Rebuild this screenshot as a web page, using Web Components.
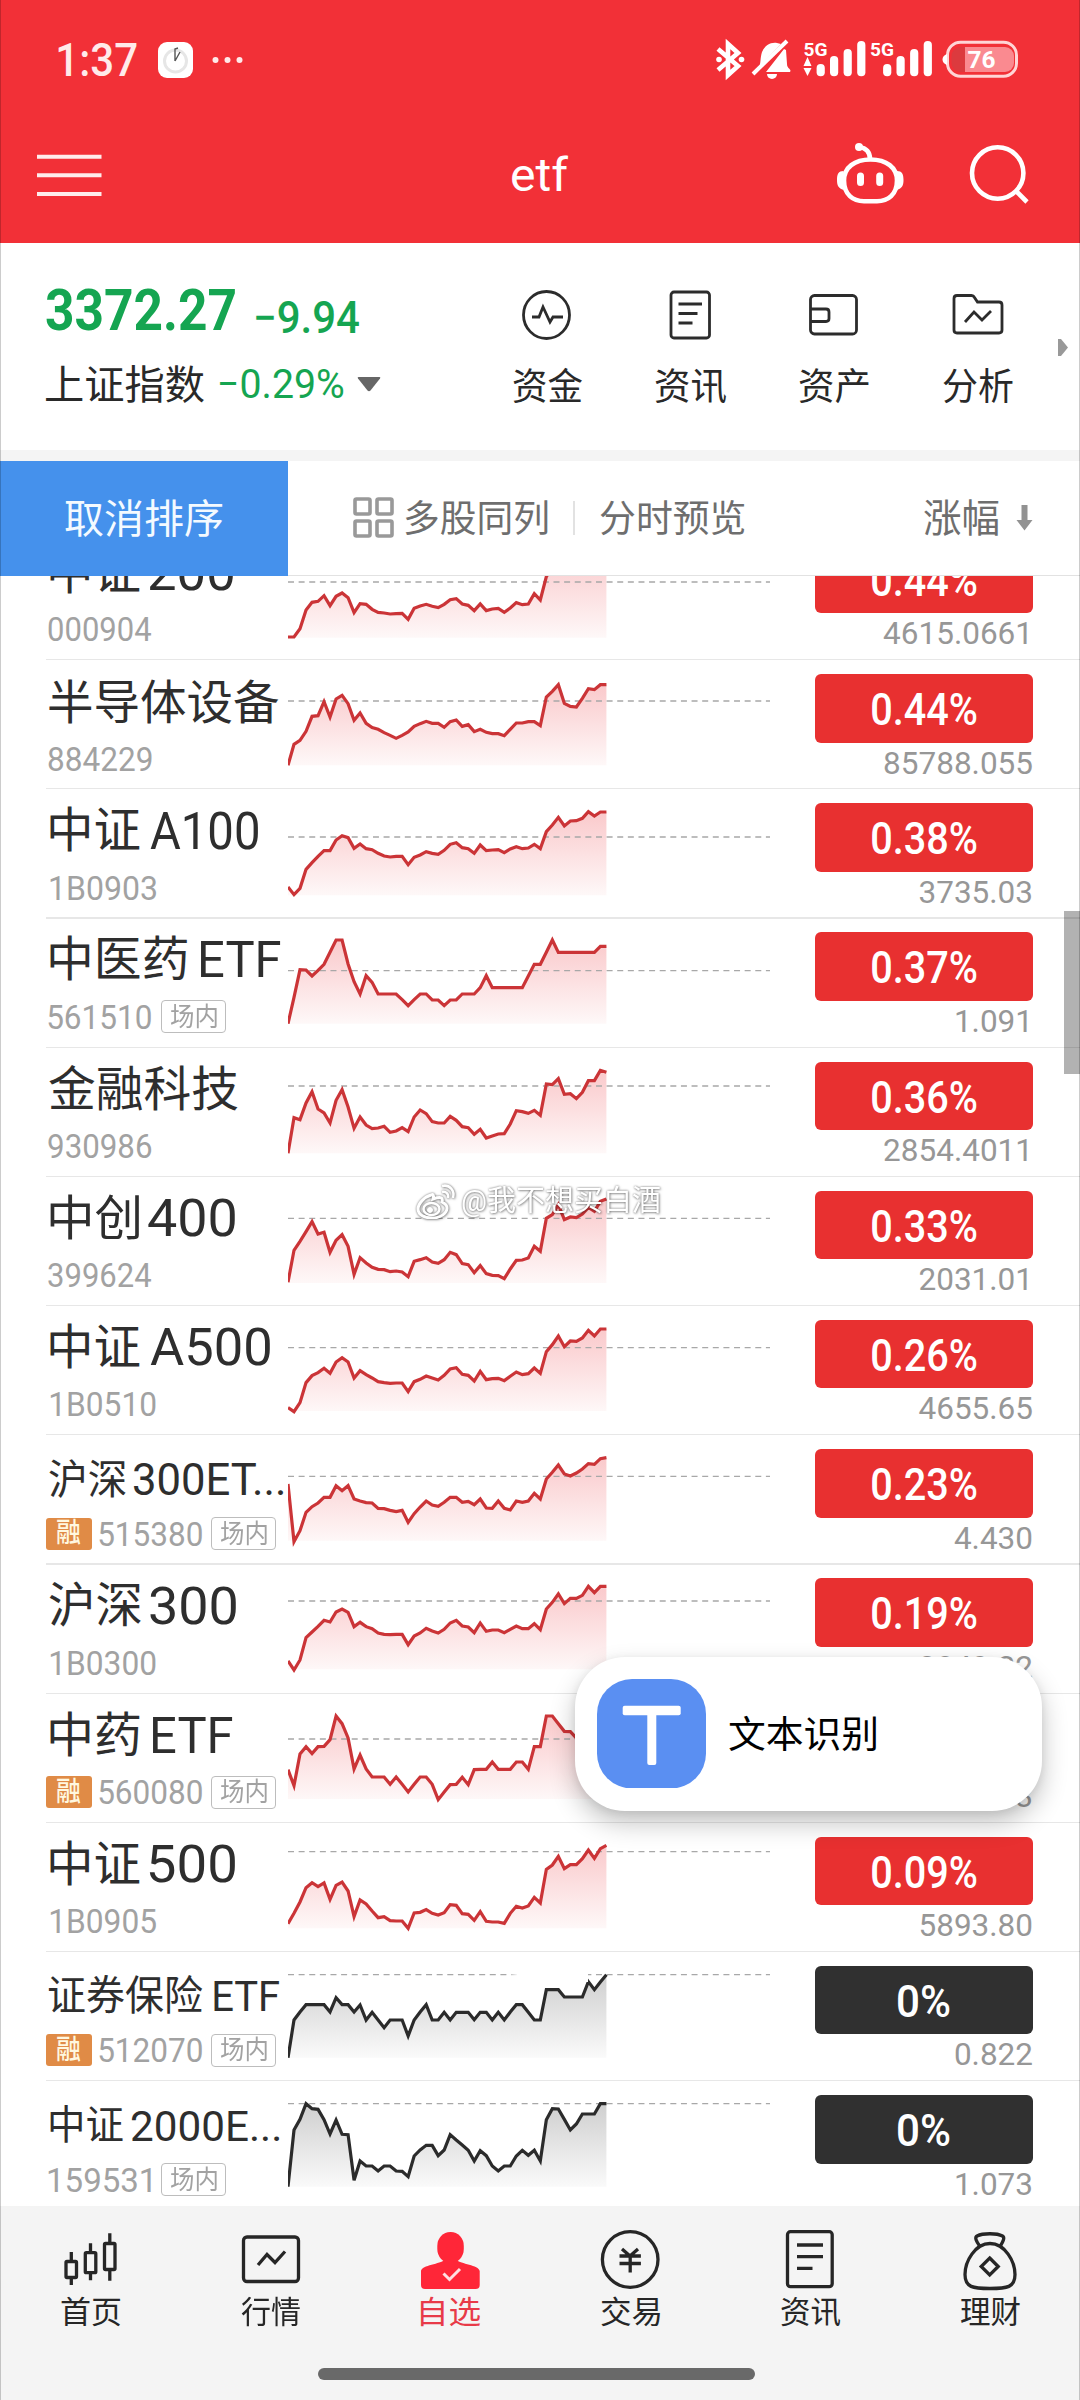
<!DOCTYPE html>
<html lang="zh-CN">
<head>
<meta charset="utf-8">
<title>etf</title>
<style>
html,body{margin:0;padding:0}
body{width:1080px;height:2400px;overflow:hidden;background:#fff;font-family:Roboto,"Noto Sans CJK SC",sans-serif}
</style>
</head>
<body>
<stock-app></stock-app>
<script>
const FAMILY = 'Roboto, "Noto Sans CJK SC", sans-serif';
const pen = document.createElement('canvas').getContext('2d');

function mount(el, css, html) {
  const root = el.attachShadow({ mode: 'open' });
  const t = document.createElement('template');
  t.innerHTML = `<style>${css}</style>${html}`;
  root.append(t.content.cloneNode(true));
  return root;
}

/* One line of text whose ink fills exactly `w` pixels, centred vertically in its box. */
class FitText extends HTMLElement {
  connectedCallback() {
    if (this.shadowRoot) return;
    const w = +this.getAttribute('w'), size = +this.getAttribute('size');
    const weight = this.getAttribute('weight') || 400;
    pen.font = `${weight} ${size}px ${FAMILY}`;
    const m = pen.measureText(this.textContent.trim());
    const s = w / (m.actualBoundingBoxLeft + m.actualBoundingBoxRight);
    mount(this, `:host{display:block;flex:none;width:${w}px;height:${size}px}
      span{display:block;width:max-content;white-space:nowrap;font:${weight} ${size}px/${size}px ${FAMILY};
      transform-origin:0 50%;transform:translateX(${m.actualBoundingBoxLeft * s}px) scaleX(${s})}`,
      '<span><slot></slot></span>');
  }
}
customElements.define('fit-text', FitText);

class StatusBar extends HTMLElement {
  connectedCallback() {
    const bars = x => [[0,64],[13.4,56],[27,49],[40.6,41]].map(([d,y]) =>
      `<rect x="${x+d}" y="${y}" width="8.2" height="${76.3-y}" rx="4"/>`).join('');
    mount(this, `:host{display:flex;height:120px;color:#ffeaea}
      .left{display:flex;align-items:center;height:120px;padding-left:58px}
      .clock{margin-left:21px;margin-right:19px}
      .right{margin-left:auto;margin-right:56px}
      svg{display:block}`,
      `<div class="left"><fit-text w="79" size="46" weight="500">1:37</fit-text>
        <svg class="clock" width="35" height="36"><rect width="35" height="36" rx="9" fill="#fff"/><circle cx="17.5" cy="19" r="11" fill="none" stroke="#e6e6e6" stroke-width="3"/><path d="M17 19V7l3-1M17 19l5-9" stroke="#555" stroke-width="1.4" fill="none"/></svg>
        <svg width="34" height="8"><g fill="#ffeaea"><circle cx="3.500" cy="4" r="3"/><circle cx="15.500" cy="4" r="3"/><circle cx="27.500" cy="4" r="3"/></g></svg></div>
      <svg class="right" width="310" height="120" viewBox="714 0 310 120" fill="#fff">
        <path d="M718 49l20 17-10 9V44l10 9-20 17" fill="none" stroke="#fff" stroke-width="4.600"/><circle cx="719" cy="59.5" r="2.8"/><circle cx="741.500" cy="59.500" r="2.800"/>
        <path d="M759 67c2-3 1-9 3-15 3-7 9-10 15-9l4 1zM766 72h24c2-3-3-3-3-8l-1-14-2-1z"/><path d="M753 74l34-33" stroke="#fff" stroke-width="4"/><path d="M767 74h10a5 5 0 0 1-10 0z"/>
        <text x="803.500" y="56" font-family="Roboto" font-weight="700" font-size="18" textLength="24" lengthAdjust="spacingAndGlyphs">5G</text>
        <path d="M803.500 66l4-9 4 9zM803.500 68l4 8 4-8z"/>${bars(816.6)}
        <text x="870" y="56" font-family="Roboto" font-weight="700" font-size="18" textLength="24" lengthAdjust="spacingAndGlyphs">5G</text>${bars(883.1)}
        <rect x="947.500" y="42.200" width="69" height="34" rx="13" fill="none" stroke="#ffd5d6" stroke-width="3"/>
        <path d="M947 54c-6 2-6 9 0 11z"/>
        <rect x="951.500" y="47" width="62" height="25" rx="9" fill="#dc3a3e"/><path d="M965 47h40a9 9 0 0 1 9 9v7a9 9 0 0 1-9 9h-40z" fill="#fa8a90"/>
        <text x="967.500" y="67.600" font-family="Roboto" font-weight="700" font-size="23.500" textLength="28" lengthAdjust="spacingAndGlyphs">76</text>
      </svg>`);
  }
}
customElements.define('status-bar', StatusBar);

class NavBar extends HTMLElement {
  connectedCallback() {
    mount(this, `:host{display:flex;align-items:center;height:110px;padding:0 48px 0 49px;color:#fff}
      svg{display:block}.side{flex:1;display:flex}.side:first-child svg,.menu{margin-left:-12px}.end{justify-content:flex-end;gap:62px}`,
      `<div class="side"><svg class="menu" width="65" height="44" viewBox="37 153 65 44"><path d="M37 156.700h64.500M37 175.300h64.500M37 194h64.500" stroke="#ffecec" stroke-width="4"/></svg></div>
      <fit-text w="57" size="46">etf</fit-text>
      <div class="side end"><svg width="72" height="70" viewBox="834 139 72 70" fill="none" stroke="#fff" stroke-width="4.600">
        <path d="M870.500 158.500c16 0 26.500 8 26.500 21 0 14-9 20.700-20 20.700h-13c-11 0-20-6.700-20-20.700 0-13 10.500-21 26.500-21z"/><path d="M870 158c0-7-4-11-11-12"/><circle cx="859" cy="146" r="4" fill="#fff" stroke="none"/>
        <path d="M843.500 170c-5 0-6.500 3-6.500 9s1.500 8 6.500 10zM897 170c5 0 6.500 3 6.500 9s-1.500 8-6.500 10z" fill="#fff" stroke="none"/>
        <path d="M860.500 175v6.500M879.700 175v6.500" stroke-width="7" stroke-linecap="round"/></svg>
        <svg width="64" height="70" viewBox="968 139 64 70" fill="none" stroke="#fff" stroke-width="4.600"><circle cx="997.700" cy="172" r="25.700"/><path d="M1016 190l11 11"/></svg></div>`);
  }
}
customElements.define('nav-bar', NavBar);

const QUICK = [
  ['资金', 69, '<ellipse cx="29.500" cy="30" rx="23" ry="23.500"/><path d="M15 32h7l4-10 7 15 3-5h10"/>'],
  ['资讯', 71, '<rect x="10" y="7" width="38.500" height="46" rx="3"/><path d="M17.500 19h23.500M17.500 28.500h19M17.500 38h14"/>'],
  ['资产', 70, '<rect x="6.500" y="10.500" width="46" height="38.500" rx="4"/><path d="M6.500 24h15.500q3 0 3 3v6.500q0 3-3 3H6.500"/>'],
  ['分析', 70, '<path d="M9 10.500h14.500q2 0 3 2l3 4.500h21.500q3 0 3 3v25q0 3-3 3h-42q-3 0-3-3v-31.500q0-3 3-3z"/><path d="M17 37l9-10 8 8 9-9"/>']
];
class IndexPanel extends HTMLElement {
  connectedCallback() {
    mount(this, `:host{display:flex;box-sizing:border-box;height:218px;padding-left:46px;background:#fff;border-bottom:11.500px solid #f4f4f4;color:#292929}
      .quote{width:429.500px}.g{color:#15a551}
      .top{display:flex;gap:21px;align-items:flex-start;padding-top:38px;height:65px}
      .top fit-text + fit-text{margin-top:15px}
      .sub{display:flex;align-items:center;gap:16px;margin-top:19px}
      .sub fit-text:first-child{position:relative;top:1px}
      svg{display:block}
      .tri{margin-left:-3px}
      .quick{display:flex}.item{width:143.600px;display:flex;flex-direction:column;align-items:center;padding-top:42px;gap:24px}
      .more{margin:96px 0 0 8px}`,
      `<div class="quote"><div class="top g"><fit-text w="189" size="58" weight="700">3372.27</fit-text><fit-text w="103" size="44" weight="500">−9.94</fit-text></div>
      <div class="sub"><fit-text w="158" size="40">上证指数</fit-text><fit-text class="g" w="123.500" size="40">−0.29%</fit-text>
      <svg class="tri" width="24" height="15"><path d="M1.500 0h21q1.500 0 .500 1.500L13.500 13.500q-1.500 1.500-3 0L1 1.500Q0 0 1.500 0z" fill="#666"/></svg></div></div>
      <div class="quick">${QUICK.map(([t,w,p]) => `<div class="item"><svg width="60" height="60" fill="none" stroke="#2c2c2c" stroke-width="2.800">${p}</svg><fit-text w="${w}" size="37">${t}</fit-text></div>`).join('')}</div>
      <svg class="more" width="12" height="18"><path d="M0 0h3l7 8.500-7 8.500H0z" fill="#999"/></svg>`);
  }
}
customElements.define('index-panel', IndexPanel);

class SortBar extends HTMLElement {
  connectedCallback() {
    mount(this, `:host{display:flex;align-items:center;box-sizing:border-box;height:115.500px;background:#fff;color:#6e6e6e;border-bottom:1px solid #e2e2e2}
      .btn{align-self:stretch;margin-bottom:-1px;width:287.500px;display:flex;align-items:center;justify-content:center;background:#4591ec;color:#f4faff}
      fit-text{margin-top:3px}
      .grid{margin:0 11.500px 0 65px}.bar{width:1.500px;height:34px;background:#e2e2e2;margin:0 25px}
      .last{margin-left:auto}.arrow{margin:0 47px 0 17px}svg{display:block}`,
      `<div class="btn"><fit-text w="158" size="40">取消排序</fit-text></div>
      <svg class="grid" width="41" height="41" fill="none" stroke="#999" stroke-width="3.600"><rect x="2" y="2" width="15" height="15" rx="1.500"/><rect x="24" y="2" width="15" height="15" rx="1.500"/><rect x="2" y="24" width="15" height="15" rx="1.500"/><rect x="24" y="24" width="15" height="15" rx="1.500"/></svg>
      <fit-text w="143" size="37">多股同列</fit-text><div class="bar"></div><fit-text w="144.500" size="37">分时预览</fit-text>
      <fit-text class="last" w="75" size="39">涨幅</fit-text>
      <svg class="arrow" width="17" height="26"><path d="M5.500 0h6v15h5l-8 10.500-8-10.500h5z" fill="#929292"/></svg>`);
  }
}
customElements.define('sort-bar', SortBar);

/* Intraday line: `top` is the row's origin in plot units, `base` the floor, `ref` the previous close. */
class SparkLine extends HTMLElement {
  set data({ top, base, ref, flat, ys }) {
    const pts = ys.map((y, i) => `${(706 + i * 14.72).toFixed(1)} ${y}`);
    const line = 'M' + pts.join('L');
    const end = 706 + (ys.length - 1) * 14.72;
    const c = flat ? ['#2b2b2b', '#cfcfcf', '#fafafa'] : ['#cb3437', '#fac9cb', '#fef8f8'];
    mount(this, `:host{display:block;width:482px;height:129.200px;flex:none}svg{display:block;overflow:hidden}path{vector-effect:non-scaling-stroke}`,
      `<svg width="482" height="129.200" viewBox="706 ${top} 1181 387.600" preserveAspectRatio="none">
      <linearGradient id="g" x1="0" y1="0" x2="0" y2="1"><stop stop-color="${c[1]}"/><stop offset="1" stop-color="${c[2]}"/></linearGradient>
      <path d="${line}L${end} ${base}L706 ${base}z" fill="url(#g)"/>
      <path d="M706 ${ref}H1887" stroke="#a8a8a8" stroke-width="1.300" stroke-dasharray="6 4.620"/>
      <path d="${line}" fill="none" stroke="${c[0]}" stroke-width="3.200"/></svg>`);
  }
}
customElements.define('spark-line', SparkLine);

/* name: runs of [text, ink width, size, gap before] */
const ROWS = [
 {name:[['中证',90,48,1],['200',84,51,9]],code:'000904',pct:'0.44%',price:'4615.0661',top:-120,base:203,ref:36,ys:[201,201,176,120,97,94,77,107,79,69,83,128,101,103,118,127,129,132,131,130,148,115,108,103,109,113,103,89,86,102,106,122,102,122,117,115,127,114,98,104,102,71,90,20,-10,-40,-20,-30,-30,-35,-55,-45,-55,-55]},
 {name:[['半导体设备',229.5,47,0]],code:'884229',pct:'0.44%',price:'85788.055',top:268,base:587,ref:394,ys:[587,524,512,485,440,438,396,442,388,377,402,452,430,461,474,479,489,497,506,497,487,470,462,455,461,461,473,456,451,470,465,486,479,488,492,492,498,479,460,460,456,456,468,382,365,345,401,410,412,386,357,360,345,345]},
 {name:[['中证',90,48,1],['A100',108,51,10]],code:'1B0903',pct:'0.38%',price:'3735.03',top:656,base:978,ref:803,ys:[953,976,957,900,880,861,844,844,812,799,805,837,824,838,841,852,860,863,861,861,886,864,857,847,852,855,843,825,820,835,838,852,827,844,842,841,850,839,832,838,836,825,838,787,767,744,770,755,754,747,727,740,728,728]},
 {name:[['中医药',137.5,48,1],['ETF',80,50,13]],code:'561510',tag:1,pct:'0.37%',price:'1.091',top:1044,base:1364,ref:1205,ys:[1364,1285,1202,1203,1221,1204,1186,1150,1113,1113,1185,1238,1275,1220,1240,1275,1275,1275,1275,1292,1310,1292,1275,1275,1293,1293,1310,1293,1293,1275,1275,1275,1256,1220,1256,1256,1256,1256,1256,1256,1221,1186,1186,1150,1113,1150,1150,1150,1150,1150,1150,1150,1132,1132]},
 {name:[['金融科技',189,48,0]],code:'930986',pct:'0.36%',price:'2854.4011',top:52,base:371,ref:169,ys:[371,264,270,220,186,238,250,280,212,180,232,296,262,286,297,295,290,308,304,294,306,262,241,252,276,280,280,260,272,291,294,314,299,325,319,313,312,283,243,246,251,242,257,163,165,147,194,192,207,188,153,153,122,128]},
 {name:[['中创',89,48,1],['400',87,51,9]],code:'399624',pct:'0.33%',price:'2031.01',top:439,base:760,ref:566,ys:[758,662,635,606,576,613,608,668,632,615,650,734,684,700,713,719,720,726,724,727,741,695,690,684,697,701,690,668,675,702,705,729,708,732,737,738,747,718,692,691,685,650,665,566,555,525,570,562,564,553,533,545,515,508]},
 {name:[['中证',90,48,1],['A500',120,51,10]],code:'1B0510',pct:'0.26%',price:'4655.65',top:827,base:1145,ref:955,ys:[1135,1147,1120,1060,1039,1030,1017,1032,998,985,998,1046,1024,1036,1046,1057,1060,1062,1061,1061,1087,1057,1050,1040,1046,1052,1038,1019,1015,1035,1038,1055,1026,1051,1048,1047,1054,1041,1028,1036,1033,1016,1032,967,946,920,952,935,936,926,903,920,899,899]},
 {name:[['沪深',77.5,41,0],['300ET...',150,44,7]],small:1,code:'515380',margin:1,tag:1,pct:'0.23%',price:'4.430',top:45,base:365,ref:172,ys:[195,368,335,280,263,252,235,235,200,215,200,240,246,251,252,268,269,274,278,274,310,284,264,246,258,262,250,235,235,250,247,257,240,267,268,246,268,273,246,250,246,223,240,180,160,138,165,171,162,150,134,136,119,116]},
 {name:[['沪深',92,48,0],['300',86,51,9]],code:'1B0300',pct:'0.19%',price:'3849.22',top:433,base:752,ref:547,ys:[727,754,724,657,640,623,605,610,580,571,581,624,611,624,630,643,647,648,647,647,678,652,643,629,637,643,632,613,605,622,625,642,613,638,634,634,642,632,622,630,630,615,633,571,551,526,555,539,539,530,503,522,503,503]},
 {name:[['中药',90,48,1],['ETF',80,50,13]],code:'560080',margin:1,tag:1,pct:'',price:'3',top:820,base:1138,ref:958,ys:[1050,1098,1003,981,1002,981,980,960,889,912,955,1048,1006,1048,1072,1072,1072,1094,1072,1094,1117,1094,1072,1072,1094,1140,1117,1095,1094,1073,1095,1050,1049,1049,1027,1049,1049,1049,1027,1027,1049,981,981,889,889,912,935,936,955,960,960,960,960,960]},
 {name:[['中证',90,48,1],['500',86,51,9]],code:'1B0905',pct:'0.09%',price:'5893.80',top:38,base:357,ref:127,ys:[343,312,278,235,220,232,221,270,228,218,245,322,272,284,305,325,322,334,335,335,357,311,309,301,312,317,310,286,288,313,315,333,307,336,338,338,342,312,291,296,290,264,281,180,167,141,178,166,166,148,122,147,118,108]},
 {name:[['证券保险',154,41,0],['ETF',65,42,11]],small:1,code:'512070',margin:1,tag:1,flat:1,pct:'0%',price:'0.822',top:425,base:745,ref:496,ys:[745,632,608,586,586,586,586,608,565,586,586,608,587,632,609,632,655,632,632,632,680,632,608,586,632,632,609,632,609,609,609,631,609,609,632,609,632,608,586,586,609,632,632,541,541,541,563,563,563,563,517,541,518,496]},
 {name:[['中证',73,40,1],['2000E...',148,43,8]],small:1,code:'159531',tag:1,flat:1,pct:'0%',price:'1.073',top:812,base:1132,ref:883,ys:[1132,962,930,883,898,900,931,974,932,975,976,1113,1055,1070,1070,1085,1070,1070,1085,1086,1102,1040,1022,1008,1008,1039,1022,976,992,1007,1023,1055,1024,1039,1070,1085,1070,1070,1040,1023,1038,1023,1055,931,898,899,930,962,944,914,914,914,883,883]}
];

class StockRow extends HTMLElement {
  set row(r) {
    const root = mount(this, `:host{display:block;height:129.200px;flex:none}
      .row{display:flex;height:129.200px;padding-left:46px}
      .info{width:242px;flex:none}
      .name{display:flex;align-items:center;height:60px;padding:${r.small ? 16 : 13}px 0 0 3px;color:#2e2e2e}
      .meta{display:flex;align-items:center;height:34px;margin-top:${r.small ? 6.500 : 9.500}px;color:#a2a2a2}
      .margin{width:45.500px;height:32px;box-sizing:border-box;border-radius:3px;background:#e08b46;color:#fff8e0;display:flex;align-items:center;justify-content:center;margin-right:7px}
      .tag{box-sizing:border-box;width:65px;height:33px;border:1.500px solid #bdbdbd;border-radius:4px;display:flex;align-items:center;justify-content:center;margin-left:9px}
      .side{flex:1;display:flex;flex-direction:column;align-items:flex-end;padding:15px 47px 0 0}
      .badge{width:218px;height:68.500px;border-radius:6px;background:${r.flat ? '#303030' : '#e83030'};color:#fff;display:flex;align-items:center;justify-content:center}
      .badge fit-text{margin-top:5px}
      .price{font:400 31.500px/36px Roboto,sans-serif;color:#979797;margin-top:3px}
      .line{height:1.200px;background:#e7e7e7;margin:-129.200px 0 128px 46px}`,
      `<div class="row"><div class="info"><div class="name"></div><div class="meta"></div></div><spark-line></spark-line>
       <div class="side"><div class="badge"></div><div class="price">${r.price}</div></div></div><div class="line"></div>`);
    root.querySelector('.name').innerHTML = r.name.map(([t,w,s,g]) =>
      `<fit-text w="${w}" size="${s}" style="margin-left:${g}px">${t}</fit-text>`).join('');
    const b = /B/.test(r.code);
    root.querySelector('.meta').innerHTML =
      (r.margin ? '<div class="margin"><fit-text w="24" size="27" weight="500">融</fit-text></div>' : '') +
      `<fit-text w="${b ? 106 : 103.5}" size="34" style="margin-left:${b ? 4 : r.margin ? 0 : 2}px">${r.code}</fit-text>` +
      (r.tag ? '<div class="tag"><fit-text w="47" size="26">场内</fit-text></div>' : '');
    if (r.pct) root.querySelector('.badge').innerHTML = `<fit-text w="${r.flat ? 52 : 105}" size="43.500" weight="500">${r.pct}</fit-text>`;
    root.querySelector('spark-line').data = r;
  }
}
customElements.define('stock-row', StockRow);

class StockList extends HTMLElement {
  connectedCallback() {
    const root = mount(this, `:host{display:block;height:1630px;overflow:hidden;background:#fff}.rows{margin-top:-46.200px}`, '<div class="rows"></div>');
    ROWS.forEach(r => {
      const el = document.createElement('stock-row');
      root.querySelector('.rows').append(el);
      el.row = r;
    });
  }
}
customElements.define('stock-list', StockList);

const TABS = [
  ['首页', '<path d="M21.300 24v8m0 18v7M40.500 15.300v8m0 22v7M59.800 5.300v9m0 28v10.500"/><rect x="16" y="33.500" width="10.500" height="16" rx="1"/><rect x="35.300" y="24.700" width="10.500" height="20" rx="1"/><rect x="54.500" y="15.500" width="10.500" height="26" rx="1"/>'],
  ['行情', '<rect x="13.500" y="9" width="55" height="44.500" rx="3.500"/><path d="M28 37l9-10.500 8 8L55 23.500"/>'],
  ['自选', '<g stroke="none" fill="#ff2638"><rect x="27.300" y="4" width="26.500" height="31" rx="13" ry="14"/><path d="M34 32h13c3 4 22 5 22.700 11v14q0 4-4 4H15q-4 0-4-4V43c.700-6 20-7 23-11z"/></g><path d="M33.500 45.500l6 6L50 41" stroke="#ffdfe2" stroke-width="3"/>'],
  ['交易', '<circle cx="40.200" cy="31.500" r="27.800"/><path d="M32 21l8 7 8-7M29.500 28h21.400M29.500 35.500h21.400M40.200 27v17.500"/>'],
  ['资讯', '<rect x="17.500" y="3.700" width="44.700" height="55" rx="3"/><path d="M27 17h26M27 28.700h26M27 40.300h15.500"/>'],
  ['理财', '<path d="M30 18.500C26 13 24.500 9.500 27 8c6-3 20-3 25.500 0 2.500 1.500 1 5-2.500 10.500"/><path d="M40 15.500c15 0 25 18 25 31 0 13-8 14-25 14s-25-1-25-14c0-13 10-31 25-31z"/><path d="M39.700 30l8.500 8.500-8.500 8.500-8.500-8.500z"/>']
];
class TabBar extends HTMLElement {
  connectedCallback() {
    mount(this, `:host{display:block;height:194px;background:#f4f4f4;color:#262626}
      .tabs{display:flex;height:162px}.tab{width:180px;display:flex;flex-direction:column;align-items:center;padding-top:22px;box-sizing:border-box}
      .tab fit-text{margin-top:4.500px}.on{color:#e83a48}svg{display:block}
      .home{width:437px;height:11.500px;border-radius:6px;background:#696969;margin-left:318px}`,
      `<div class="tabs">${TABS.map(([t,p],i) => `<div class="tab${i === 2 ? ' on' : ''}"><svg width="80" height="64" fill="none" stroke="#262626" stroke-width="3.300">${p}</svg><fit-text w="59" size="31">${t}</fit-text></div>`).join('')}</div><div class="home"></div>`);
  }
}
customElements.define('tab-bar', TabBar);

class OcrPopup extends HTMLElement {
  connectedCallback() {
    mount(this, `:host{display:flex;align-items:center;box-sizing:border-box;width:467px;height:154px;padding-left:22px;gap:23px;border-radius:50px;background:#fff;color:#000;box-shadow:0 12px 26px rgba(0,0,0,.24),0 2px 8px rgba(0,0,0,.08)}svg{display:block}fit-text{margin-top:3px}`,
    `<svg width="109" height="109.500"><rect width="109" height="109.500" rx="35" fill="#5a8ff2"/><rect x="25.700" y="26.700" width="58" height="9.500" rx="2" fill="#fff"/><rect x="50.300" y="28" width="9" height="58" rx="2" fill="#fff"/></svg><fit-text w="147" size="37">文本识别</fit-text>`);
  }
}
customElements.define('ocr-popup', OcrPopup);

class WaterMark extends HTMLElement {
  connectedCallback() {
    mount(this, `:host{display:flex;align-items:center;gap:6px;height:40px;color:#fff;filter:drop-shadow(0 0 1px rgba(0,0,0,.5)) drop-shadow(1px 1px 1px rgba(0,0,0,.25))}svg{display:block}`,
    `<svg width="40" height="36" fill="none" stroke="#fff"><path d="M15 12C8 14 2 21 2 26c0 6 7 9 14 9 9 0 15-5 15-10 0-4-3-5-5-6 1-4 0-6-9-3 1-4 0-5-2-4z" stroke-width="3"/><ellipse cx="15.500" cy="26" rx="8" ry="6" stroke-width="2.500"/><circle cx="14" cy="27" r="2.500" fill="#fff"/><path d="M26 3c8-2 13 5 11 12M26 9c4-1 7 2 6 6" stroke-width="2.500"/></svg><fit-text w="198" size="29">@我不想买白酒</fit-text>`);
  }
}
customElements.define('water-mark', WaterMark);

class StockApp extends HTMLElement {
  connectedCallback() {
    mount(this, `:host{display:flex;flex-direction:column;position:relative;width:1080px;height:2400px;overflow:hidden}
      header{height:242.500px;background:#f23037;flex:none}
      .over{position:absolute}
      ocr-popup{left:575px;top:1656.700px}water-mark{left:416px;top:1181px}
      .scroll{left:1064px;top:911px;width:16px;height:163px;background:rgba(0,0,0,.3)}
      .ghost{left:508px;top:1956px;width:80px;height:26px;background:linear-gradient(90deg,rgba(255,255,255,0),#fff 10px)}
      .ghost::after{content:"";position:absolute;inset:0;box-shadow:1px 1px 2px rgba(0,0,0,.2);clip-path:inset(0 -4px -4px 0);-webkit-mask:linear-gradient(135deg,transparent 40%,#000)}
      .edges{inset:0;border:solid rgba(0,0,0,.2);border-width:0 1px;pointer-events:none}`,
      `<header><status-bar></status-bar><nav-bar></nav-bar></header><index-panel></index-panel><sort-bar></sort-bar><stock-list></stock-list><tab-bar></tab-bar>
      <div class="over ghost"></div><water-mark class="over"></water-mark><div class="over scroll"></div><ocr-popup class="over"></ocr-popup><div class="over edges"></div>`);
  }
}
customElements.define('stock-app', StockApp);
</script>
</body>
</html>
